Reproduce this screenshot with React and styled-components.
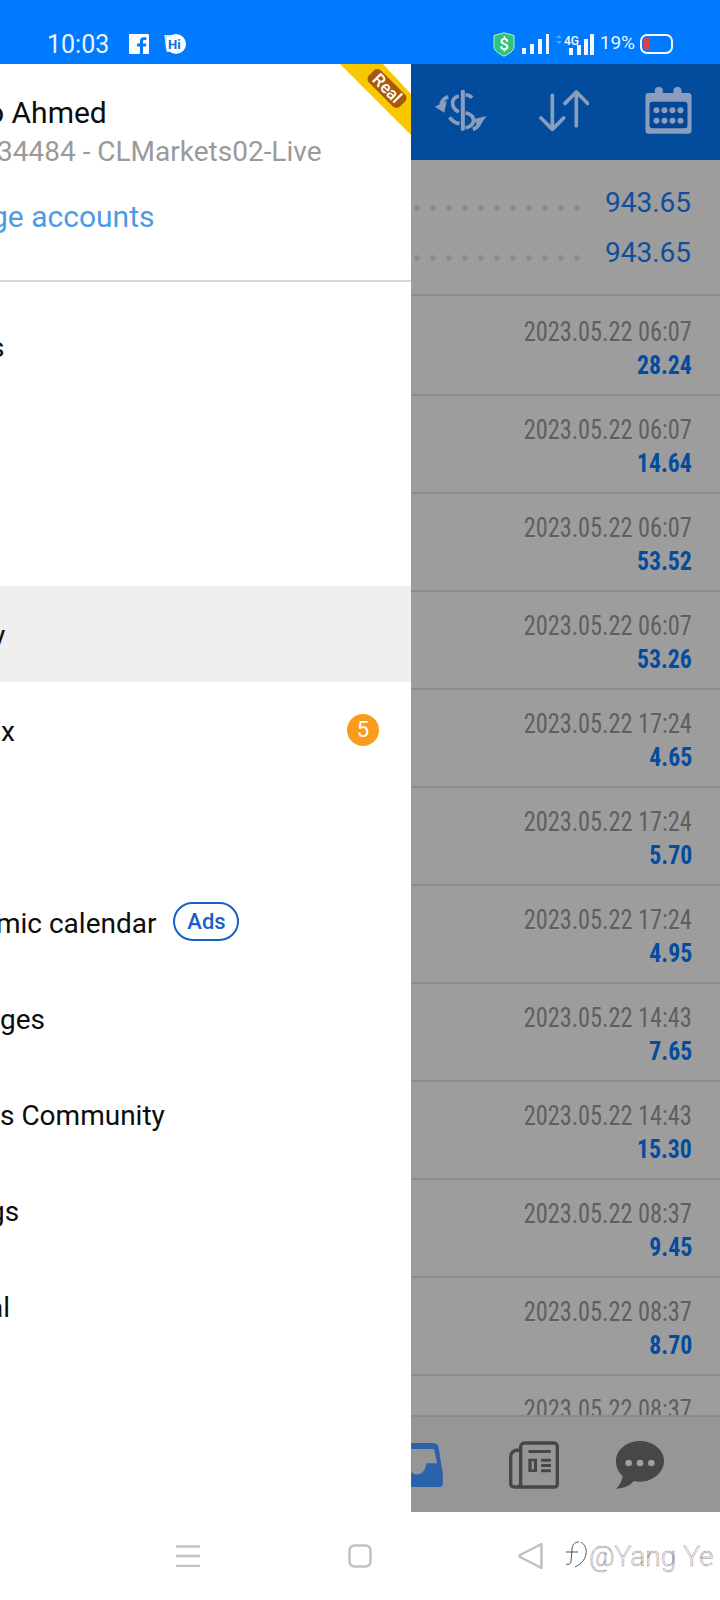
import React from "react";
import styled, { createGlobalStyle } from "styled-components";

const GlobalStyle = createGlobalStyle`
  html, body { margin: 0; padding: 0; background: #fff; }
  body { font-family: Roboto, "Noto Sans", sans-serif; }
  svg { flex: none; }
`;

const Page = styled.div`
  width: 720px;
  height: 1600px;
  display: flex;
  flex-direction: column;
  overflow: hidden;
`;

/* status bar */
const StatusBar = styled.div`
  height: 64px;
  background: #007aff;
  display: flex;
  align-items: center;
  padding: 24px 0 0 47px;
  box-sizing: border-box;
  color: #eaf4ff;
`;
const Time = styled.span`
  font-size: 25px;
  width: 82px;
`;
const StatusRight = styled.div`
  margin-left: auto;
  margin-right: 47px;
  display: flex;
  align-items: center;
  gap: 7px;
`;
const Percent = styled.span`
  font-size: 19px;
  margin: 0 -2px 3px -1px;
`;

/* main area */
const Main = styled.div`
  flex: 1;
  display: flex;
  min-height: 0;
`;

/* drawer */
const Drawer = styled.div`
  position: relative;
  width: 411px;
  flex: none;
  background: #fff;
  overflow: hidden;
`;
const Account = styled.div`
  height: 218px;
  box-sizing: border-box;
  padding-top: 31px;
  border-bottom: 2px solid #d8d8d8;
`;
const Name = styled.div`
  font-size: 30px;
  line-height: 36px;
  color: #0c0c0c;
  margin-left: -13px;
  white-space: nowrap;
`;
const Server = styled.div`
  font-size: 28px;
  line-height: 36px;
  margin-top: 3px;
  color: #9a9a9a;
  margin-left: -3px;
  white-space: nowrap;
`;
const Manage = styled.div`
  font-size: 30px;
  line-height: 36px;
  margin-top: 29px;
  color: #4c9be3;
  margin-left: -9px;
  white-space: nowrap;
`;
const Ribbon = styled.div`
  position: absolute;
  top: 0;
  right: 0;
  width: 71px;
  height: 71px;
  background: #f7c800;
  clip-path: polygon(0 0, 43px 0, 100% 30px, 100% 100%);
`;
const RibbonLabel = styled.span`
  position: absolute;
  left: 25px;
  top: 16px;
  width: 44px;
  height: 17px;
  line-height: 17px;
  border-radius: 5px;
  text-align: center;
  font-size: 17px;
  font-weight: 500;
  color: #fff;
  background: #a9590f;
  transform: rotate(45deg);
`;
const Menu = styled.div`
  padding-top: 16px;
`;
const MenuRow = styled.div`
  height: 96px;
  box-sizing: border-box;
  padding-top: 2px;
  display: flex;
  align-items: center;
  font-size: 28px;
  color: #0d0d0d;
  white-space: nowrap;
  background: ${(p) => (p.$active ? "#efefef" : "transparent")};
`;
const MenuLabel = styled.span`
  margin-left: ${(p) => p.$shift || 0}px;
`;
const Badge = styled.span`
  margin-left: auto;
  margin-right: 32px;
  margin-top: -2px;
  width: 32px;
  height: 32px;
  border-radius: 50%;
  background: #f99c1c;
  color: #fff;
  font-size: 22px;
  line-height: 32px;
  text-align: center;
`;
const AdsPill = styled.span`
  margin-left: 17px;
  margin-top: -3px;
  width: 66px;
  height: 39px;
  box-sizing: border-box;
  border: 2px solid #1a5fc8;
  border-radius: 20px;
  color: #1a5fc8;
  font-size: 22px;
  font-weight: 500;
  line-height: 35px;
  text-align: center;
`;

/* right panel, dimmed by the drawer */
const Panel = styled.div`
  flex: 1;
  min-width: 0;
  display: flex;
  flex-direction: column;
  background: #9d9d9d;
`;
const Header = styled.div`
  height: 96px;
  flex: none;
  background: #024b9d;
  display: flex;
  align-items: center;
  padding: 0 0 3px 23px;
  box-sizing: border-box;
  gap: 52px;
`;
const Scroll = styled.div`
  flex: 1;
  min-height: 0;
  overflow: hidden;
`;
const Summary = styled.div`
  height: 136px;
  box-sizing: border-box;
  padding: 17px 29px 0 0;
  border-bottom: 2px solid #8c8c8c;
`;
const SummaryRow = styled.div`
  height: 50px;
  display: flex;
  align-items: center;
  gap: 17px;
`;
const Dots = styled.div`
  flex: 1;
  height: 6px;
  margin-top: 12px;
  background: radial-gradient(circle at 6px 3px, #8b8b8b 2.5px, transparent 3px) repeat-x;
  background-size: 16px 6px;
`;
const Balance = styled.span`
  font-size: 28px;
  color: #0f4f9d;
`;
const Deal = styled.div`
  height: 98px;
  box-sizing: border-box;
  padding: 19px 28px 0 0;
  border-bottom: 2px solid #8c8c8c;
  display: flex;
  flex-direction: column;
  align-items: flex-end;

  ${Summary} + & {
    height: 100px;
    padding-top: 21px;
  }
`;
const DealDate = styled.span`
  font-family: "Roboto Condensed", Roboto, sans-serif;
  font-size: 27px;
  line-height: 30px;
  color: #5f5f5f;
  white-space: nowrap;
  transform: scaleX(0.9);
  transform-origin: right center;
`;
const DealProfit = styled.span`
  font-family: "Roboto Condensed", Roboto, sans-serif;
  font-size: 25px;
  font-weight: 700;
  line-height: 30px;
  margin-top: 4px;
  color: #034c9f;
  transform: scaleX(0.95);
  transform-origin: right center;
`;
const Tabs = styled.div`
  height: 97px;
  flex: none;
  box-sizing: border-box;
  background: #969696;
  border-top: 2px solid #8c8c8c;
  display: flex;
  align-items: center;
`;

/* nav bar */
const NavBar = styled.div`
  height: 88px;
  flex: none;
  background: #fff;
  display: flex;
  align-items: center;
  padding-left: 176px;
`;
const Watermark = styled.div`
  margin-left: 20px;
  display: flex;
  align-items: center;
  gap: 2px;
`;
const WatermarkText = styled.span`
  font-family: Roboto, sans-serif;
  font-weight: 300;
  font-size: 28px;
  color: #fff;
  -webkit-text-stroke: 0.5px #8a8a8a;
  white-space: nowrap;
`;

const ICON = "#8a9dbd";

const FacebookIcon = () => (
  <svg width="20" height="20" viewBox="0 0 20 20" style={{ marginRight: 14 }}>
    <path fillRule="evenodd" fill="#fff" d="M1 0h18a1 1 0 0 1 1 1v18a1 1 0 0 1-1 1h-5v-7.5h3l.4-3H14V7.6c0-1 .4-1.5 1.6-1.5h1.8V3.4c-.5 0-1.4-.2-2.5-.2-2.500 0-4 1.500-4 4v2.300H8v3h2.900V20H1a1 1 0 0 1-1-1V1a1 1 0 0 1 1-1z" />
  </svg>
);

const HiIcon = () => (
  <svg width="24" height="20" viewBox="0 0 24 20">
    <path fill="#cfe4ff" d="M1 1h12l-3 17H4C2 14 3 8 1 1z" />
    <circle cx="13" cy="10" r="10" fill="#fff" />
    <rect x="4" y="3" width="12" height="14" fill="#fff" />
    <text x="5" y="15" fontFamily="Roboto" fontWeight="700" fontSize="13" fill="#0a6fe0">Hi</text>
  </svg>
);

const ShieldIcon = () => (
  <svg width="22" height="25" viewBox="0 0 22 25">
    <path fill="#2fc47c" stroke="#b8f0d0" strokeWidth="1" d="M11 .8 21 3.500v12c0 3-5 6.500-10 8.700C6 22 1 18.500 1 15.500v-12z" />
    <text x="11" y="18" textAnchor="middle" fontFamily="Roboto" fontWeight="500" fontSize="17" fill="#fff">$</text>
  </svg>
);

const SignalBars = ({ heights, width = 27 }) => (
  <svg width={width} height="20" viewBox={`0 0 ${width} 20`}>
    {heights.map((h, i) => (
      <rect key={i} x={i * 8} y={20 - h} width="4" height={h} fill="#f2f8ff" />
    ))}
  </svg>
);

const Signal4G = () => (
  <svg width="38" height="22" viewBox="0 0 38 22">
    <path d="M3 2 6 5H0zM3 11 0 8h6z" fill="#5fa9f5" />
    <text x="8" y="12" fontFamily="Roboto" fontSize="13" fontWeight="500" fill="#f2f8ff" textLength="15" lengthAdjust="spacingAndGlyphs">4G</text>
    <rect x="13" y="15" width="4" height="7" fill="#f2f8ff" />
    <rect x="21" y="12" width="4" height="10" fill="#f2f8ff" />
    <rect x="28" y="6" width="4" height="16" fill="#f2f8ff" />
    <rect x="34" y="1" width="4" height="21" fill="#f2f8ff" />
  </svg>
);

const Battery = () => (
  <svg width="33" height="20" viewBox="0 0 33 20">
    <rect x="1" y="1" width="31" height="18" rx="6" fill="none" stroke="#f2f8ff" strokeWidth="2" />
    <path d="M6 4h4v12H6a2 2 0 0 1-2-2V6a2 2 0 0 1 2-2z" fill="#e0403f" />
  </svg>
);

const SwapIcon = () => (
  <svg width="53" height="42" viewBox="0 0 158 126">
    <rect x="80" y="0" width="12" height="122" rx="4" fill={ICON} />
    <g fill="none" stroke={ICON} strokeWidth="11">
      <path d="M74 18C50 24 48 52 74 66" />
      <path d="M94 14c8 1 15 4 20 9" />
      <path d="M94 68c32 8 32 38 0 46" />
      <path d="M46 82c8 11 18 17 30 19" />
      <path d="M42 20C30 24 24 32 20 42" />
      <path d="M116 118c12-4 18-12 22-22" />
    </g>
    <path d="M2 50 38 32 30 68z" fill={ICON} />
    <path d="M157 78 118 88 134 112z" fill={ICON} />
  </svg>
);

const ArrowsIcon = () => (
  <svg width="50" height="42" viewBox="0 0 150 126" fill="none" stroke={ICON} strokeWidth="11" strokeLinecap="round" strokeLinejoin="round">
    <path d="M40 16V116M6 84l34 34 34-34" />
    <path d="M112 8V108M78 40 112 6l34 34" />
  </svg>
);

const CalendarIcon = () => (
  <svg width="47" height="47" viewBox="0 0 138 141" style={{ marginLeft: 4 }}>
    <rect x="28" y="0" width="24" height="32" rx="11" fill={ICON} />
    <rect x="84" y="0" width="24" height="32" rx="11" fill={ICON} />
    <rect x="0" y="18" width="138" height="122" rx="9" fill={ICON} />
    <rect x="12" y="44" width="114" height="80" rx="9" fill="#02469a" />
    {[0, 1].map((r) =>
      [0, 1, 2, 3].map((c) => (
        <circle key={`${r}${c}`} cx={33 + c * 24} cy={70 + r * 31} r="9" fill={ICON} />
      ))
    )}
  </svg>
);

const InboxIcon = () => (
  <svg width="32" height="44" viewBox="0 0 95 132">
    <path fill="#2a63ab" d="M0 0h66c8 0 13 4 16 12l13 80v30c0 6-4 10-10 10H0z" />
    <path fill="#969696" d="M0 18h64c3 0 5 2 6 5l8 38H46c-3 20-12 33-28 33-8 0-14-3-18-8z" />
  </svg>
);

const NewsIcon = () => (
  <svg width="50" height="48" viewBox="0 0 150 142" style={{ marginLeft: 66 }}>
    <path fill="none" stroke="#474747" strokeWidth="10" d="M30 26C14 26 5 34 5 46v80c0 6 4 11 12 11h118c6 0 10-4 10-10V16c0-6-4-11-10-11H46c-6 0-11 5-11 11v110c0 6-3 11-10 11" />
    <g fill="#474747">
      <rect x="58" y="26" width="68" height="9" rx="3" />
      <path fillRule="evenodd" d="M58 52h26v40H58zM68 60v24h7V60z" />
      <rect x="96" y="52" width="30" height="9" rx="3" />
      <rect x="96" y="68" width="30" height="9" rx="3" />
      <rect x="96" y="84" width="30" height="9" rx="3" />
    </g>
  </svg>
);

const ChatIcon = () => (
  <svg width="48" height="48" viewBox="0 0 144 144" style={{ marginLeft: 57 }}>
    <path fill="#474747" d="M72 0c40 0 72 27 72 60s-32 62-72 62c-6 0-12-1-18-2C40 136 20 142 0 143c10-8 18-22 20-38C7 94 0 78 0 60 0 27 32 0 72 0z" />
    <circle cx="38" cy="66" r="10" fill="#a0a0a0" />
    <circle cx="72" cy="66" r="10" fill="#a0a0a0" />
    <circle cx="106" cy="66" r="10" fill="#a0a0a0" />
  </svg>
);

const NavMenuIcon = () => (
  <svg width="24" height="22" viewBox="0 0 24 22" style={{ marginRight: 148 }}>
    <path d="M0 1.500h24M0 11h24M0 21h24" stroke="#c4c4c4" strokeWidth="2.500" />
  </svg>
);

const NavSquareIcon = () => (
  <svg width="24" height="24" viewBox="0 0 24 24" style={{ marginRight: 146 }}>
    <rect x="1.500" y="1.500" width="21" height="21" rx="5" fill="none" stroke="#c0c0c0" strokeWidth="2.500" />
  </svg>
);

const NavBackIcon = () => (
  <svg width="25" height="28" viewBox="0 0 25 28">
    <path d="M23.500 2v24L2 15a1.500 1.500 0 0 1 0-2z" fill="none" stroke="#c0c0c0" strokeWidth="2.500" strokeLinejoin="round" />
  </svg>
);

const WeiboMark = () => (
  <svg width="24" height="32" viewBox="0 0 24 32" fill="none" stroke="#555" strokeWidth="1">
    <path d="M16 2c-5 0-7 3-7 8l-1 11c0 3-2 4-5 3" />
    <path d="M3 12h12" />
    <path d="M18 2c4 3 6 7 5 12-1 6-5 10-11 13" />
  </svg>
);

const menuItems = [
  { label: "s", shift: -10 },
  { label: "" },
  { label: "" },
  { label: "y", shift: -8, active: true },
  { label: "x", shift: 1, badge: 5 },
  { label: "" },
  { label: "mic calendar", shift: -4, ads: true },
  { label: "ges", shift: 0 },
  { label: "s Community", shift: 0 },
  { label: "gs", shift: -11 },
  { label: "al", shift: -12 },
];

const deals = [
  ["2023.05.22 06:07", "28.24"],
  ["2023.05.22 06:07", "14.64"],
  ["2023.05.22 06:07", "53.52"],
  ["2023.05.22 06:07", "53.26"],
  ["2023.05.22 17:24", "4.65"],
  ["2023.05.22 17:24", "5.70"],
  ["2023.05.22 17:24", "4.95"],
  ["2023.05.22 14:43", "7.65"],
  ["2023.05.22 14:43", "15.30"],
  ["2023.05.22 08:37", "9.45"],
  ["2023.05.22 08:37", "8.70"],
  ["2023.05.22 08:37", ""],
];

const App = () => {
  return (
    <Page>
      <GlobalStyle />
      <StatusBar>
        <Time>10:03</Time>
        <FacebookIcon />
        <HiIcon />
        <StatusRight>
          <ShieldIcon />
          <SignalBars heights={[6, 10, 15, 20]} />
          <Signal4G />
          <Percent>19%</Percent>
          <Battery />
        </StatusRight>
      </StatusBar>
      <Main>
        <Drawer>
          <Ribbon>
            <RibbonLabel>Real</RibbonLabel>
          </Ribbon>
          <Account>
            <Name>o Ahmed</Name>
            <Server>34484 - CLMarkets02-Live</Server>
            <Manage>ge accounts</Manage>
          </Account>
          <Menu>
            {menuItems.map((item, i) => (
              <MenuRow key={i} $active={item.active}>
                <MenuLabel $shift={item.shift}>{item.label}</MenuLabel>
                {item.ads && <AdsPill>Ads</AdsPill>}
                {item.badge && <Badge>{item.badge}</Badge>}
              </MenuRow>
            ))}
          </Menu>
        </Drawer>
        <Panel>
          <Header>
            <SwapIcon />
            <ArrowsIcon />
            <CalendarIcon />
          </Header>
          <Scroll>
            <Summary>
              <SummaryRow>
                <Dots />
                <Balance>943.65</Balance>
              </SummaryRow>
              <SummaryRow>
                <Dots />
                <Balance>943.65</Balance>
              </SummaryRow>
            </Summary>
            {deals.map(([date, profit], i) => (
              <Deal key={i}>
                <DealDate>{date}</DealDate>
                <DealProfit>{profit}</DealProfit>
              </Deal>
            ))}
          </Scroll>
          <Tabs>
            <InboxIcon />
            <NewsIcon />
            <ChatIcon />
          </Tabs>
        </Panel>
      </Main>
      <NavBar>
        <NavMenuIcon />
        <NavSquareIcon />
        <NavBackIcon />
        <Watermark>
          <WeiboMark />
          <WatermarkText>@Yang Ye</WatermarkText>
        </Watermark>
      </NavBar>
    </Page>
  );
};

export default App;
